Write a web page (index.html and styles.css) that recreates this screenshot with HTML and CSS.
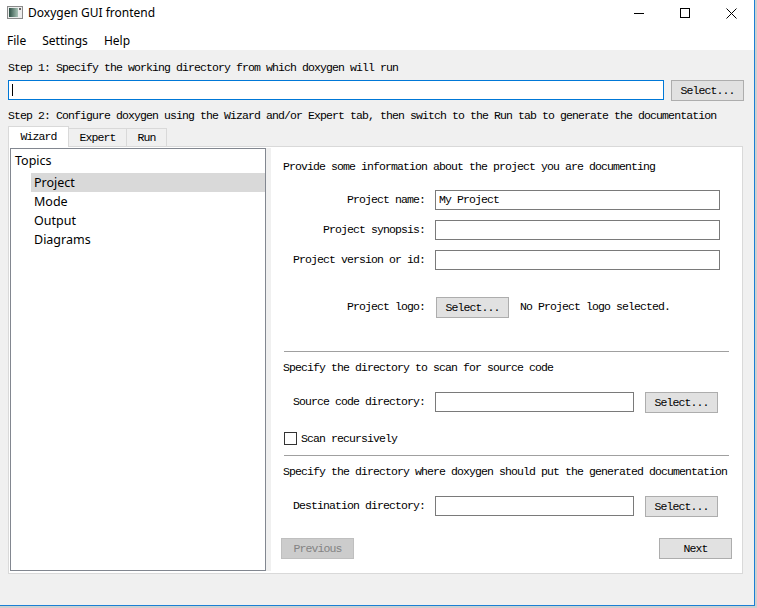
FILE: index.html
```html
<!DOCTYPE html>
<html>
<head>
<meta charset="utf-8">
<title>Doxygen GUI frontend</title>
<link rel="stylesheet" href="styles.css">
</head>
<body>
<div class="desktop">
  <div class="window">
    <div class="titlebar">
      <svg class="app-icon" width="16" height="13" viewBox="0 0 16 13">
        <defs>
          <linearGradient id="ig" x1="0" y1="0" x2="1" y2="0">
            <stop offset="0" stop-color="#2c4f44"/>
            <stop offset="1" stop-color="#a9c2b6"/>
          </linearGradient>
        </defs>
        <rect x="0.5" y="0.5" width="15" height="12" fill="#ececec" stroke="#8a8a8a"/>
        <rect x="2" y="2" width="9" height="9" fill="url(#ig)"/>
        <rect x="12" y="2" width="2" height="2" fill="#666"/>
      </svg>
      <span class="title">Doxygen GUI frontend</span>
      <div class="controls">
        <span class="ctl"><svg width="10" height="10" viewBox="0 0 10 10"><path d="M0 5.5H10" stroke="#000" stroke-width="1"/></svg></span>
        <span class="ctl"><svg width="10" height="10" viewBox="0 0 10 10"><rect x="0.5" y="0.5" width="9" height="9" fill="none" stroke="#000"/></svg></span>
        <span class="ctl"><svg width="11" height="11" viewBox="0 0 11 11"><path d="M0.5 0.5L10.5 10.5M10.5 0.5L0.5 10.5" stroke="#000" stroke-width="1"/></svg></span>
      </div>
    </div>
    <div class="menubar">
      <span class="menu-item">File</span>
      <span class="menu-item">Settings</span>
      <span class="menu-item">Help</span>
    </div>
    <div class="client">
      <div class="step">Step 1: Specify the working directory from which doxygen will run</div>
      <div class="dir-row">
        <div class="input focus"><span class="caret"></span></div>
        <button class="btn">Select...</button>
      </div>
      <div class="step step2">Step 2: Configure doxygen using the Wizard and/or Expert tab, then switch to the Run tab to generate the documentation</div>
      <div class="tabs">
        <div class="tab active">Wizard</div>
        <div class="tab">Expert</div>
        <div class="tab">Run</div>
      </div>
      <div class="pane">
        <div class="tree">
          <div class="tree-root">Topics</div>
          <div class="tree-children">
            <div class="tree-item selected">Project</div>
            <div class="tree-item">Mode</div>
            <div class="tree-item">Output</div>
            <div class="tree-item">Diagrams</div>
          </div>
        </div>
        <div class="splitter"></div>
        <div class="wizard">
          <div class="heading">Provide some information about the project you are documenting</div>
          <div class="form">
            <label class="lbl">Project name:</label>
            <div class="input wide">My Project</div>
            <label class="lbl">Project synopsis:</label>
            <div class="input wide"></div>
            <label class="lbl">Project version or id:</label>
            <div class="input wide"></div>
          </div>
          <div class="logo-row">
            <label class="lbl">Project logo:</label>
            <button class="btn logo-btn">Select...</button>
            <span class="note">No Project logo selected.</span>
          </div>
          <div class="sep sep1"></div>
          <div class="heading h2">Specify the directory to scan for source code</div>
          <div class="field-row">
            <label class="lbl">Source code directory:</label>
            <div class="input dir"></div>
            <button class="btn">Select...</button>
          </div>
          <div class="check-row">
            <span class="checkbox"></span>
            <span class="check-label">Scan recursively</span>
          </div>
          <div class="sep sep2"></div>
          <div class="heading h2">Specify the directory where doxygen should put the generated documentation</div>
          <div class="field-row">
            <label class="lbl">Destination directory:</label>
            <div class="input dir"></div>
            <button class="btn">Select...</button>
          </div>
          <div class="nav-row">
            <button class="btn disabled">Previous</button>
            <button class="btn">Next</button>
          </div>
        </div>
      </div>
    </div>
  </div>
</div>
</body>
</html>
```

FILE: styles.css
```css
* { box-sizing: border-box; }
html, body { margin: 0; padding: 0; }
body {
  width: 757px;
  height: 608px;
  overflow: hidden;
  background: #cfcfcf;
  font-family: "Noto Sans", "DejaVu Sans", sans-serif;
  color: #000;
}
.desktop { width: 757px; height: 608px; background: #cfcfcf; }
.window {
  width: 755px;
  height: 606px;
  border-right: 1px solid #1a7fd4;
  border-bottom: 1px solid #1a7fd4;
  background: #f0f0f0;
  display: flex;
  flex-direction: column;
}
.titlebar {
  height: 30px;
  background: #fff;
  display: flex;
  align-items: flex-start;
}
.app-icon { margin: 6px 0 0 7px; display: block; }
.title {
  margin: 5px 0 0 5px;
  font-size: 12px;
  line-height: 16px;
}
.controls { margin-left: auto; display: flex; }
.ctl {
  width: 46px;
  height: 26px;
  display: flex;
  align-items: center;
  justify-content: center;
}
.ctl svg { display: block; }
.menubar {
  height: 20px;
  background: #fff;
  display: flex;
  align-items: center;
  padding-left: 7px;
  gap: 16px;
  font-size: 12px;
}
.client {
  flex: 1;
  padding: 8px 10px 0 8px;
  font-family: "Liberation Mono", "DejaVu Sans Mono", monospace;
  font-size: 11.5px;
  letter-spacing: -0.9px;
  display: flex;
  flex-direction: column;
}
.step { height: 18px; line-height: 19px; white-space: nowrap; }
.step2 { margin-top: 5px; }
.dir-row { display: flex; align-items: flex-start; gap: 7px; margin-top: 4px; height: 21px; }
.input {
  height: 20px;
  border: 1px solid #7a7a7a;
  background: #fff;
  line-height: 18px;
  padding-left: 3px;
  white-space: nowrap;
}
.dir-row .input { flex: 1; }
.input.focus { border-color: #0078d7; }
.caret {
  display: block;
  width: 1px;
  height: 12px;
  background: #000;
  margin-top: 3px;
}
.btn {
  width: 73px;
  height: 21px;
  border: 1px solid #adadad;
  background: #e1e1e1;
  font-family: "Liberation Mono", "DejaVu Sans Mono", monospace;
  font-size: 11.5px;
  letter-spacing: -0.9px;
  color: #000;
  padding: 0;
  margin: 0;
  line-height: 19px;
  text-align: center;
}
.btn.disabled { background: #cccccc; border-color: #bfbfbf; color: #838383; }
.tabs {
  display: flex;
  align-items: flex-end;
  margin-top: 2px;
  height: 21px;
  margin-bottom: -1px;
  position: relative;
  z-index: 1;
}
.tab {
  height: 19px;
  border: 1px solid #d9d9d9;
  border-left: none;
  background: #f0f0f0;
  line-height: 17px;
  text-align: center;
}
.tab:nth-child(2) { width: 58px; }
.tab:nth-child(3) { width: 40px; }
.tab.active {
  width: 61px;
  height: 21px;
  border-left: 1px solid #d9d9d9;
  border-bottom: none;
  background: #fff;
  line-height: 20px;
}
.pane {
  height: 428px;
  margin-right: 1px;
  border: 1px solid #d9d9d9;
  background: #fff;
  padding: 1px 0 2px 1px;
  display: flex;
}
.tree {
  width: 256px;
  border: 1px solid #828790;
  background: #fff;
  padding-top: 2px;
  font-family: "Noto Sans", "DejaVu Sans", sans-serif;
  font-size: 12.5px;
  letter-spacing: 0;
}
.tree-root { height: 19px; line-height: 19px; padding-left: 4px; }
.tree-children { margin-top: 3px; margin-left: 20px; }
.tree-item { height: 19px; line-height: 19px; padding-left: 3px; }
.tree-item.selected { background: #d9d9d9; }
.splitter { width: 5px; background: #f0f0f0; }
.wizard {
  width: 471px;
  background: #fff;
  padding: 10px 10px 0 10px;
  display: flex;
  flex-direction: column;
}
.heading { height: 18px; line-height: 18px; margin-left: 2px; white-space: nowrap; }
.form {
  display: grid;
  grid-template-columns: 144px 285px;
  column-gap: 10px;
  row-gap: 10px;
  margin-top: 14px;
}
.lbl {
  display: block;
  text-align: right;
  height: 20px;
  line-height: 20px;
  white-space: nowrap;
}
.logo-row {
  display: flex;
  align-items: flex-start;
  margin-top: 27px;
  height: 21px;
}
.logo-row .lbl { width: 144px; }
.logo-btn { margin-left: 11px; }
.note { margin-left: 11px; white-space: nowrap; line-height: 20px; }
.sep { height: 1px; background: #a0a0a0; margin: 0 3px; }
.sep1 { margin-top: 33px; }
.h2 { margin-top: 7px; }
.field-row {
  display: flex;
  align-items: flex-start;
  margin-top: 15px;
  height: 21px;
}
.field-row .lbl { width: 144px; }
.field-row .input.dir { width: 199px; margin-left: 10px; }
.field-row .btn { margin-left: 11px; }
.check-row {
  display: flex;
  align-items: center;
  margin-top: 19px;
  margin-left: 3px;
  height: 13px;
}
.checkbox {
  width: 13px;
  height: 13px;
  border: 1px solid #333;
  background: #fff;
}
.check-label { margin-left: 4px; line-height: 13px; }
.sep2 { margin-top: 10px; }
.nav-row {
  display: flex;
  justify-content: space-between;
  margin-top: 21px;
}
```
